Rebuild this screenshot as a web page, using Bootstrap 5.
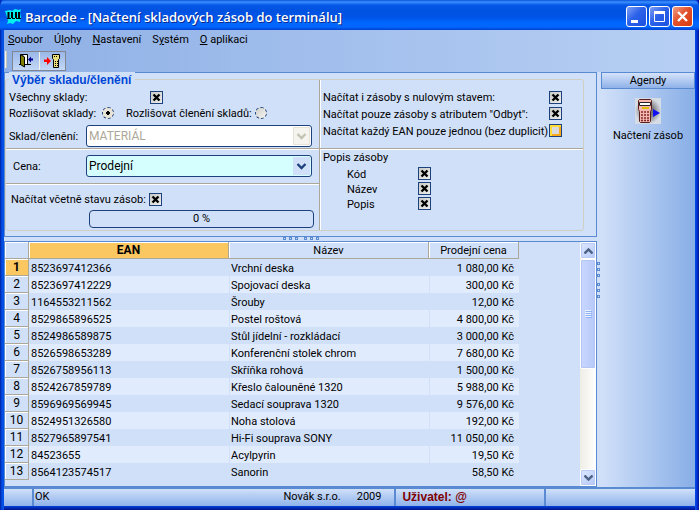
<!DOCTYPE html>
<html lang="cs">
<head>
<meta charset="utf-8">
<meta name="viewport" content="width=device-width, initial-scale=1">
<title>Barcode - [Načtení skladových zásob do terminálu]</title>
<link href="https://cdn.jsdelivr.net/npm/bootstrap@5.3.0/dist/css/bootstrap.min.css" rel="stylesheet">
<style>
:root{--line:#5a8ad2;--face:#d1e0f9;--ink:#1c417c;--etch:#aca899}
body{font:11px/16px Roboto,"Liberation Sans",sans-serif;color:#000;background:#d1e0f9}
label{white-space:nowrap;line-height:15px;padding-top:1px}
.win{min-height:100vh;padding:0 4px 4px;background:linear-gradient(90deg,#001ea0,#0050e6 2px,#0050e6 4px,transparent 4px,transparent calc(100% - 4px),#0050e6 calc(100% - 4px),#0030d8 calc(100% - 2px),#00138c),linear-gradient(#0050e6 calc(100% - 4px),#0040d8 calc(100% - 4px),#00138c)}
.titlebar{height:30px;margin:0 -4px;padding:3px 6px 0 5px;border-radius:6px 6px 0 0;background:linear-gradient(#0a52d8,#3c90ff 2px,#0558e8 5px,#0052e0 10px,#0054e6 17px,#0067ff 23px,#0066fc 27px,#0040d0);color:#fff;font:600 13px/24px "Open Sans",sans-serif;text-shadow:1px 1px #0a2a90}
.caption-text{margin-left:3px}
.winbtns{gap:2px}
.winbtn{width:21px;height:21px;padding:0;border:1px solid #fff;border-radius:3px;background:linear-gradient(135deg,#7f9ff5,#2c62ea 45%,#1c50e0);display:grid;place-items:center}
.winbtn.x-btn{background:linear-gradient(135deg,#f0a088,#e2512c 45%,#d83c10)}
.bars{background:linear-gradient(90deg,#8fb0e6,#b7cff3)}
.menubar{font-size:11px;line-height:19px;padding:0 4px;gap:11px;height:20px}
.menubar a{color:#000;text-decoration:none}
.tools{height:22px;padding:1px 1px 1px}
.grip{width:2px;height:17px;background:#f4f3e8;border-right:1px solid #c8c6b4}
.toolset{height:20px;margin-left:5px;border:1px solid #82868f;background:linear-gradient(#9ab7e8,#c4d8f6)}
.toolset button{width:26px;height:18px;padding:0;border:0;background:none;display:grid;place-items:center}
.toolset button+button{border-left:1px solid #f4f3e8}
.work{background:#cfdff8}
.pane{border:1px solid var(--line);background:var(--face)}
.grips{gap:3px}
.grips i{width:3px;height:3px;border:1px solid var(--line)}
.grips i:nth-child(4){margin-left:3px}
.vgrips i:nth-child(4){margin:3px 0 0}
.hsplit{height:4px}.vsplit{width:4px}
.filters{margin:6px 12px 5px 0;border:1px solid #cfcfc4;border-radius:3px;display:grid;grid-template-columns:313fr 264fr;position:relative}
.filters legend{position:absolute;top:-8px;left:3px;width:auto;margin:0;padding:0 4px 0 3px;background:var(--face);color:#0046d5;font:bold 12px/16px "Liberation Sans",Arial,sans-serif}
.etch{border-bottom:1px solid var(--etch);box-shadow:0 1px #fff}
.half-r{border-left:1px solid var(--etch);box-shadow:inset 1px 0 #fff}
.sect1{height:69px;padding:9px 7px 0 3px}
.sect2{height:35px;padding:6px 7px 6px 3px}
.sect3{padding:7px 5px 2px 5px}
.lab{width:77px}.lab-a{width:141px}.lab-c{width:138px}.lab-s{width:71px}
.lab-r{width:93px}.lab-t{width:141px;padding-left:12px}
input.tick{appearance:none;width:13px;height:13px;margin:0;border:1px solid var(--ink);border-radius:0;background:linear-gradient(135deg,#c9c9c4,#eeeeee);flex:none}
input.tick:checked{background:url("data:image/svg+xml,%3Csvg xmlns='http://www.w3.org/2000/svg' viewBox='0 0 11 11'%3E%3Cpath d='M2.500 2.500l6 6M8.500 2.500l-6 6' stroke='%23000' stroke-width='2.400'/%3E%3C/svg%3E") center/11px 11px,linear-gradient(135deg,#c9c9c4,#eeeeee)}
input.tick.hot{background:#dadada;box-shadow:inset 2px 2px #ffdc38,inset -2px -2px #f8a818}
input.dot{appearance:none;width:12px;height:12px;margin:0;border:1px dashed var(--ink);border-radius:50%;background:linear-gradient(135deg,#cfcfcc,#f4f4f0);flex:none}
input.dot:checked{background:radial-gradient(circle,#000 0 2px,#e8e4d8 2px)}
select.pick{flex:1;min-width:0;height:22px;padding:0 24px 0 0;font-size:12px;line-height:18px;color:#000;border:1px solid var(--ink);border-radius:3px;background:url("data:image/svg+xml,%3Csvg xmlns='http://www.w3.org/2000/svg' viewBox='0 0 17 18'%3E%3Cpath d='M0 0h17v18H0z' fill='%23d1e0f9'/%3E%3Cpath d='M4.500 7l4 4 4-4' fill='none' stroke='%231c417c' stroke-width='2.400'/%3E%3C/svg%3E") right 1px center/17px 18px no-repeat #d5ffff;appearance:none;text-indent:2px}
select.pick:disabled{color:#aca899;opacity:1;background:url("data:image/svg+xml,%3Csvg xmlns='http://www.w3.org/2000/svg' viewBox='0 0 17 18'%3E%3Cpath d='M.5.5h16v17H.5z' fill='%23f5f4ee' stroke='%23e6e4d8'/%3E%3Cpath d='M4.500 7l4 4 4-4' fill='none' stroke='%23c4c2b4' stroke-width='2.400'/%3E%3C/svg%3E") right 1px center/17px 18px no-repeat #fff}
.meter{height:18px;margin:3px 0 0 78px;border:1px solid var(--ink);border-radius:4px;background:var(--face);color:#000;font-size:11px}
.right-top{height:69px;padding:9px 21px 0 3px}
.right-low{padding:1px 3px}
.right-low .opt{padding-left:24px;height:15px}
.row17{height:17px}
.stock{table-layout:fixed;width:514px;border-collapse:separate;border-spacing:0;line-height:16px}
.stock th,.stock td{height:17px;padding:0 2px;white-space:nowrap;overflow:hidden}
.stock td{line-height:15px;padding-top:2px}
.stock thead th{font-weight:400;text-align:center;line-height:15px;padding-top:1px}
.stock th{background:var(--face);border-right:1px solid var(--etch);border-bottom:1px solid var(--etch);box-shadow:inset 1px 1px #fff}
.stock tbody th{font-weight:400;font-size:12px;text-align:center;line-height:15px;padding-top:1px}
.stock thead th.on,.stock tbody th.on{background:#fbc761;font-weight:700;font-size:12px}
.stock td:nth-child(n+3){border-left:1px solid var(--face);padding-left:1px}
.stock tbody tr:nth-child(even) td{background:#e1ebfe}
.stock td:last-child{text-align:right;padding-right:5px}
.sbar{width:16px;background:linear-gradient(90deg,#eeede5,#fff)}
.sbar button{height:17px;width:16px;padding:0;border:1px solid #fff;border-radius:2px;background:linear-gradient(135deg,#dfe9ff,#b4c8f8);box-shadow:inset 0 0 0 1px #b9cbf5;display:grid;place-items:center}
.thumb{height:110px;border:1px solid #fff;border-radius:2px;background:linear-gradient(90deg,#c9d7fd,#b7c9fa);box-shadow:inset 0 0 0 1px #b3c6f4;display:grid;place-items:center}
.side{width:94px;background:linear-gradient(90deg,#d1e0f9,#88aee6)}
.side h2{font-size:11px;line-height:15px;margin:0;border:1px solid var(--line);background:linear-gradient(#d5e3fa,#8fb1e8);font-weight:400}
.task{border:0;background:none;padding:9px 0 0;font-size:11px;line-height:16px;color:#000}
.status{height:19px;border-top:2px solid var(--line);line-height:16px;background:linear-gradient(#d0e0f9,#8fb2ea);display:grid;grid-template-columns:28px 363fr 150fr 151fr}
.status>div+div{border-left:2px solid var(--line);padding:0 1px}
.user{color:#800000;font:bold 12px/16px "Liberation Sans",Arial,sans-serif}
.status .user{padding-left:6px}
</style>
<script src="https://cdn.jsdelivr.net/npm/bootstrap@5.3.0/dist/js/bootstrap.bundle.min.js"></script>
</head>
<body>
<div class="win d-flex flex-column">
<header class="titlebar d-flex align-items-center">
<svg width="17" height="17" viewBox="0 0 17 17" aria-hidden="true"><path d="M0 3l5-1 2 1 3-2 4 1 2-1-1 4 1 4-1 5-4-1-3 3-3-1-3 1 1-3-1-4z" fill="#00f0f0"/><path d="M3.500 4v6M7 4v6M11 4v6M14 4v6" stroke="#000" stroke-width="2"/><path d="M2 10.500h4m1 0h3m1 0h5" stroke="#000"/></svg>
<span class="flex-grow-1 caption-text">Barcode - [Načtení skladových zásob do terminálu]</span>
<div class="winbtns d-flex">
<button class="winbtn" aria-label="Minimalizovat"><svg width="17" height="17"><path d="M3 12h7v3H3z" fill="#fff"/></svg></button>
<button class="winbtn" aria-label="Maximalizovat"><svg width="17" height="17"><path d="M3.500 4.500h10v9h-10z" fill="none" stroke="#fff"/><path d="M3 3h11v3H3z" fill="#fff"/></svg></button>
<button class="winbtn x-btn" aria-label="Zavřít"><svg width="17" height="17"><path d="M4 4l9 9M13 4l-9 9" stroke="#fff" stroke-width="2.400"/></svg></button>
</div>
</header>
<div class="bars">
<nav class="menubar d-flex">
<a href="#"><u>S</u>oubor</a><a href="#">Ú<u>l</u>ohy</a><a href="#"><u>N</u>astavení</a><a href="#">S<u>y</u>stém</a><a href="#"><u>O</u> aplikaci</a>
</nav>
<div class="tools d-flex">
<div class="grip"></div>
<div class="toolset d-flex">
<button aria-label="Konec"><svg width="17" height="16"><path d="M2.500 1.500h7v10M1 11.500h12" fill="none" stroke="#000"/><path d="M6 2h3v9H6z" fill="#fff"/><path d="M2.500 1.500l4 2.500v10l-4-2.500z" fill="#808000" stroke="#000"/><path d="M10 6.500l3-3v2h2v2h-2v2z" fill="#000090"/></svg></button>
<button aria-label="Načíst z terminálu"><svg width="17" height="16"><path d="M0 6.500h3V4l4 4-4 4V9H0z" fill="#f00"/><path d="M8.500 1.500h7v4l-1 1v8h-5v-8l-1-1z" fill="#eadf78" stroke="#000"/><path d="M10 3.500h4M11 8.500h3M11 10.500h3M11 12.500h3" stroke="#000" stroke-dasharray="1 1"/></svg></button>
</div>
</div>
</div>
<main class="work d-flex flex-grow-1">
<div class="d-flex flex-column flex-grow-1">
<section class="pane">
<fieldset class="filters">
<legend>Výběr skladu/členění</legend>
<div>
<div class="sect1 etch">
<div class="d-flex align-items-center"><label class="lab-a" for="all">Všechny sklady:</label><input class="tick" type="checkbox" id="all" checked></div>
<div class="d-flex align-items-center"><label class="lab-r" for="r1">Rozlišovat sklady:</label><input class="dot" type="radio" name="r" id="r1" checked><label class="lab-t" for="r2">Rozlišovat členění skladů:</label><input class="dot" type="radio" name="r" id="r2"></div>
<div class="d-flex align-items-center mt-1"><label class="lab" for="sk">Sklad/členění:</label><select class="pick" id="sk" disabled><option>MATERIÁL</option></select></div>
</div>
<div class="sect2 etch d-flex align-items-center"><label class="lab ps-1" for="cena">Cena:</label><select class="pick" id="cena"><option>Prodejní</option></select></div>
<div class="sect3">
<div class="d-flex align-items-center"><label class="lab-c" for="stav">Načítat včetně stavu zásob:</label><input class="tick" type="checkbox" id="stav" checked></div>
<div class="meter progress justify-content-center align-items-center" role="progressbar" aria-label="Průběh" aria-valuenow="0" aria-valuemin="0" aria-valuemax="100">0 %</div>
</div>
</div>
<div class="half-r">
<div class="right-top etch">
<div class="d-flex align-items-center justify-content-between"><label for="n1">Načítat i zásoby s nulovým stavem:</label><input class="tick" type="checkbox" id="n1" checked></div>
<div class="d-flex align-items-center justify-content-between row17"><label for="n2">Načítat pouze zásoby s atributem "Odbyt":</label><input class="tick" type="checkbox" id="n2" checked></div>
<div class="d-flex align-items-center justify-content-between row17"><label for="n3">Načítat každý EAN pouze jednou (bez duplicit)</label><input class="tick hot" type="checkbox" id="n3"></div>
</div>
<div class="right-low">
<div>Popis zásoby</div>
<div class="opt d-flex align-items-center"><label class="lab-s" for="p1">Kód</label><input class="tick" type="checkbox" id="p1" checked></div>
<div class="opt d-flex align-items-center"><label class="lab-s" for="p2">Název</label><input class="tick" type="checkbox" id="p2" checked></div>
<div class="opt d-flex align-items-center"><label class="lab-s" for="p3">Popis</label><input class="tick" type="checkbox" id="p3" checked></div>
</div>
</div>
</fieldset>
</section>
<div class="hsplit grips d-flex justify-content-center"><i></i><i></i><i></i><i></i><i></i><i></i></div>
<section class="pane flex-grow-1 d-flex justify-content-between">
<table class="stock align-self-start">
<colgroup><col style="width:24px"><col style="width:200px"><col style="width:200px"><col style="width:90px"></colgroup>
<thead><tr><th></th><th class="on">EAN</th><th>Název</th><th>Prodejní cena</th></tr></thead>
<tbody>
<tr><th class="on">1</th><td>8523697412366</td><td>Vrchní deska</td><td>1 080,00 Kč</td></tr>
<tr><th>2</th><td>8523697412229</td><td>Spojovací deska</td><td>300,00 Kč</td></tr>
<tr><th>3</th><td>1164553211562</td><td>Šrouby</td><td>12,00 Kč</td></tr>
<tr><th>4</th><td>8529865896525</td><td>Postel roštová</td><td>4 800,00 Kč</td></tr>
<tr><th>5</th><td>8524986589875</td><td>Stůl jídelní - rozkládací</td><td>3 000,00 Kč</td></tr>
<tr><th>6</th><td>8526598653289</td><td>Konferenční stolek chrom</td><td>7 680,00 Kč</td></tr>
<tr><th>7</th><td>8526758956113</td><td>Skříňka rohová</td><td>1 500,00 Kč</td></tr>
<tr><th>8</th><td>8524267859789</td><td>Křeslo čalouněné 1320</td><td>5 988,00 Kč</td></tr>
<tr><th>9</th><td>8596969569945</td><td>Sedací souprava 1320</td><td>9 576,00 Kč</td></tr>
<tr><th>10</th><td>8524951326580</td><td>Noha stolová</td><td>192,00 Kč</td></tr>
<tr><th>11</th><td>8527965897541</td><td>Hi-Fi souprava SONY</td><td>11 050,00 Kč</td></tr>
<tr><th>12</th><td>84523655</td><td>Acylpyrin</td><td>19,50 Kč</td></tr>
<tr><th>13</th><td>8564123574517</td><td>Sanorin</td><td>58,50 Kč</td></tr>
</tbody>
</table>
<div class="sbar d-flex flex-column">
<button aria-label="Nahoru"><svg width="9" height="6"><path d="M.5 5.500l4-4 4 4" fill="none" stroke="#4d6185" stroke-width="2.400"/></svg></button>
<div class="thumb"><svg width="7" height="8"><path d="M0 .5h6M0 2.500h6M0 4.500h6M0 6.500h6" stroke="#eef4fe"/><path d="M1 1.500h6M1 3.500h6M1 5.500h6M1 7.500h6" stroke="#8cb0f8"/></svg></div>
<button class="mt-auto" aria-label="Dolů"><svg width="9" height="6"><path d="M.5.5l4 4 4-4" fill="none" stroke="#4d6185" stroke-width="2.400"/></svg></button>
</div>
</section>
</div>
<div class="vsplit grips vgrips d-flex flex-column justify-content-center"><i></i><i></i><i></i><i></i><i></i><i></i></div>
<aside class="side">
<h2 class="text-center">Agendy</h2>
<button class="task w-100 d-flex flex-column align-items-center">
<svg width="26" height="26" viewBox="0 0 26 26" aria-hidden="true"><defs><radialGradient id="g"><stop offset=".4" stop-color="#777"/><stop offset="1" stop-color="#d6dce4"/></radialGradient></defs><path d="M0 0h26v26H0z" fill="url(#g)"/><path d="M3.500 2.500l1-1h11l1 1v9l-1 2v10l-1 1h-9l-1-1v-10l-1-2z" fill="#f4b8b0" stroke="#5a2020"/><path d="M4.500 4.500h11v3h-11z" fill="#fff" stroke="#222"/><path d="M7 10h7" stroke="#e0c000" stroke-width="2"/><path d="M6 14h2m1 0h2m1 0h2M6 17h2m1 0h2m1 0h2M6 20h2m1 0h2m1 0h2M6 22.500h2m1 0h2m1 0h2" stroke="#802828" stroke-width="1.600"/><path d="M18 11l7 4-7 4z" fill="#1010f0"/></svg>
<span class="mt-1">Načtení zásob</span>
</button>
</aside>
</main>
<footer class="status">
<div></div>
<div class="d-flex"><span class="flex-grow-1">OK</span><span>Novák s.r.o.</span><span class="ms-3 me-2 pe-1">2009</span></div>
<div class="user">Uživatel: @</div>
<div></div>
</footer>
</div>
</body>
</html>
